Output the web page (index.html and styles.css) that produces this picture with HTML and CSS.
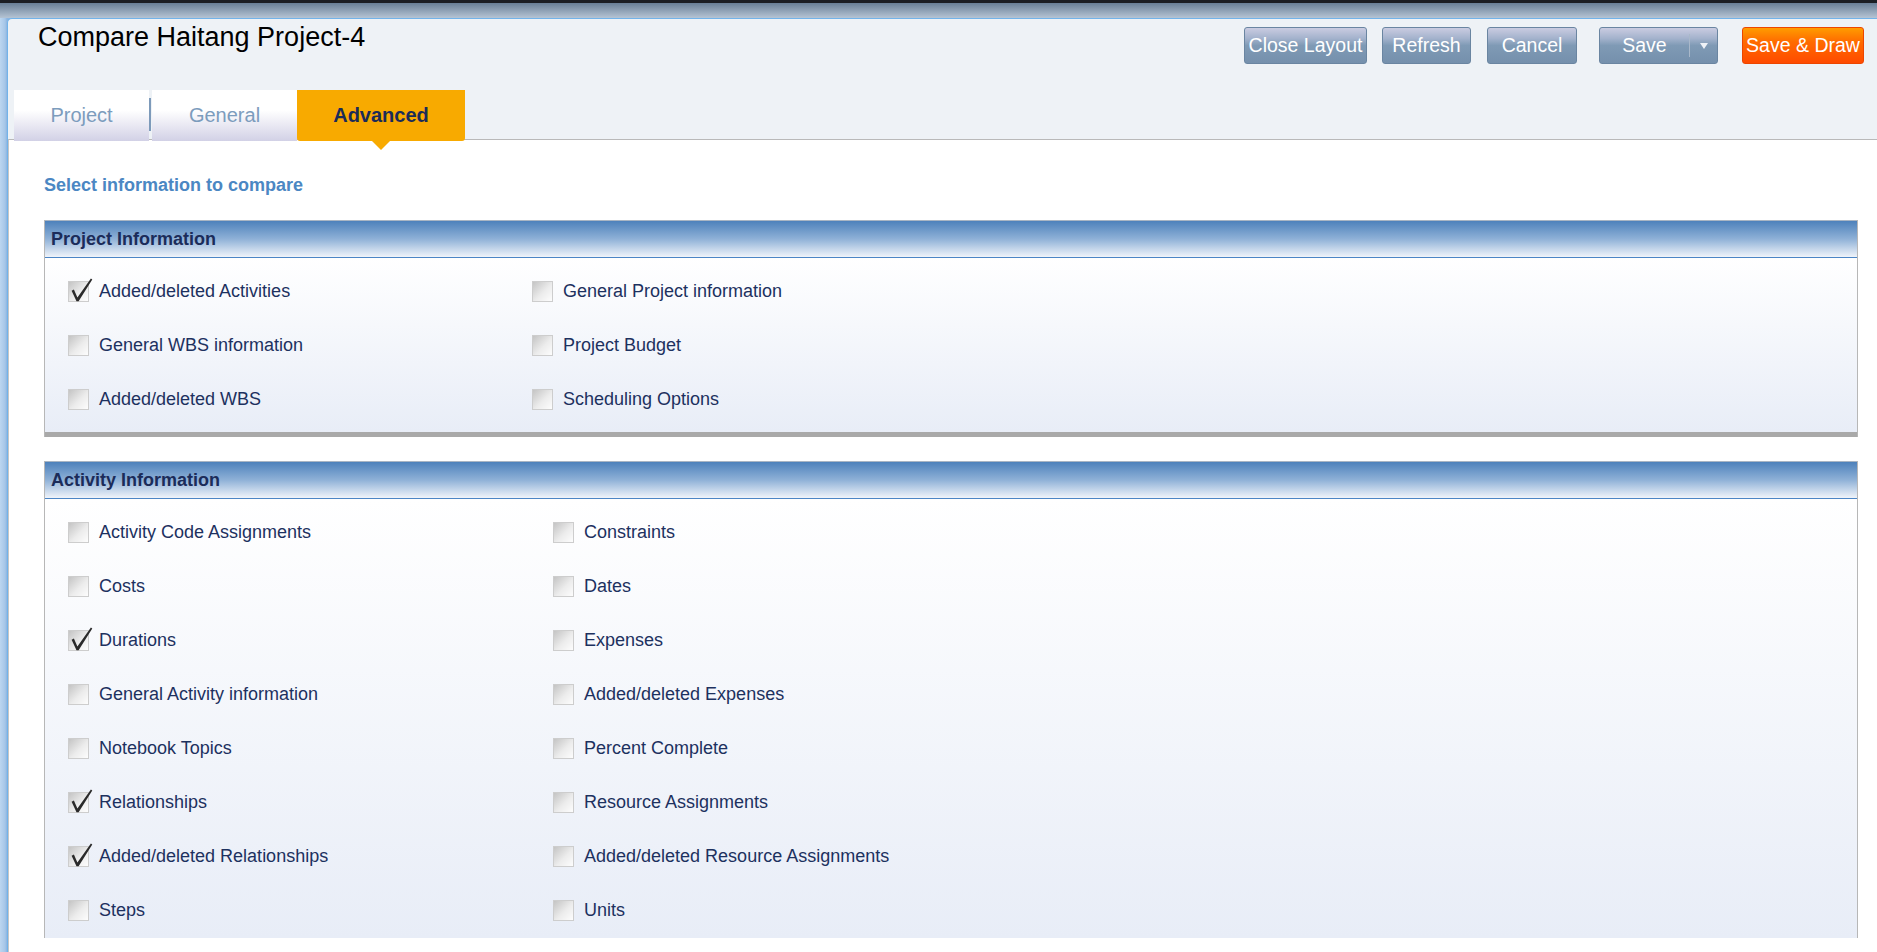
FILE: index.html
```html
<!DOCTYPE html>
<html lang="en">

<head>
    <meta charset="UTF-8">
    <meta name="viewport" content="width=device-width, initial-scale=1.0">
    <title>Compare Haitang Project-4</title>
    <link rel="stylesheet" href="styles.css">
</head>

<body>
    <div class="frame">
        <div class="panel">
            <div class="panel-head">
                <h1 class="title">Compare Haitang Project-4</h1>
                <div class="actions">
                    <button class="btn btn-close">Close Layout</button>
                    <button class="btn btn-refresh">Refresh</button>
                    <button class="btn btn-cancel">Cancel</button>
                    <div class="btn btn-save">
                        <span class="save-main">Save</span>
                        <span class="save-sep"></span>
                        <span class="save-drop"><i></i></span>
                    </div>
                    <button class="btn btn-draw">Save &amp; Draw</button>
                </div>
            </div>

            <div class="tabs">
                <div class="tab tab-project">Project</div>
                <div class="tab-sep"></div>
                <div class="tab tab-general">General</div>
                <div class="tab tab-active">Advanced</div>
            </div>

            <div class="content">
                <p class="lead">Select information to compare</p>

                <!-- project level options -->
                <div class="group group-project">
                    <div class="group-head">Project Information</div>
                    <div class="group-body">
                        <label class="opt"><span class="box checked"><svg width="26" height="26" viewBox="0 0 26 26"><path d="M3.6 12.8 L5.9 11.4 L9.4 19.4 L22.9 0.6 L24.3 1.5 L10.6 23.3 L8.5 23.3 Z" /></svg></span>Added/deleted Activities</label>
                        <label class="opt"><span class="box"></span>General Project information</label>
                        <label class="opt"><span class="box"></span>General WBS information</label>
                        <label class="opt"><span class="box"></span>Project Budget</label>
                        <label class="opt"><span class="box"></span>Added/deleted WBS</label>
                        <label class="opt"><span class="box"></span>Scheduling Options</label>
                    </div>
                </div>

                <!-- activity level options -->
                <div class="group group-activity">
                    <div class="group-head">Activity Information</div>
                    <div class="group-body">
                        <label class="opt"><span class="box"></span>Activity Code Assignments</label>
                        <label class="opt"><span class="box"></span>Constraints</label>
                        <label class="opt"><span class="box"></span>Costs</label>
                        <label class="opt"><span class="box"></span>Dates</label>
                        <label class="opt"><span class="box checked"><svg width="26" height="26" viewBox="0 0 26 26"><path d="M3.6 12.8 L5.9 11.4 L9.4 19.4 L22.9 0.6 L24.3 1.5 L10.6 23.3 L8.5 23.3 Z" /></svg></span>Durations</label>
                        <label class="opt"><span class="box"></span>Expenses</label>
                        <label class="opt"><span class="box"></span>General Activity information</label>
                        <label class="opt"><span class="box"></span>Added/deleted Expenses</label>
                        <label class="opt"><span class="box"></span>Notebook Topics</label>
                        <label class="opt"><span class="box"></span>Percent Complete</label>
                        <label class="opt"><span class="box checked"><svg width="26" height="26" viewBox="0 0 26 26"><path d="M3.6 12.8 L5.9 11.4 L9.4 19.4 L22.9 0.6 L24.3 1.5 L10.6 23.3 L8.5 23.3 Z" /></svg></span>Relationships</label>
                        <label class="opt"><span class="box"></span>Resource Assignments</label>
                        <label class="opt"><span class="box checked"><svg width="26" height="26" viewBox="0 0 26 26"><path d="M3.6 12.8 L5.9 11.4 L9.4 19.4 L22.9 0.6 L24.3 1.5 L10.6 23.3 L8.5 23.3 Z" /></svg></span>Added/deleted Relationships</label>
                        <label class="opt"><span class="box"></span>Added/deleted Resource Assignments</label>
                        <label class="opt"><span class="box"></span>Steps</label>
                        <label class="opt"><span class="box"></span>Units</label>
                    </div>
                </div>
            </div>
        </div>
    </div>
</body>

</html>
```

FILE: styles.css
```css
* {
    margin: 0;
    box-sizing: border-box;
}

html,
body {
    height: 100%;
}

body {
    font-family: "Liberation Sans", Arial, sans-serif;
    background: linear-gradient(to right, #bcd6f0, #a6c6e8 5px, #8db5e0 7px);
    overflow: hidden;
}

/* window chrome: dark strip + grey-blue bar on top */
.frame {
    height: 100%;
    padding: 18px 0 0 7px;
    background: linear-gradient(to bottom, #1b1e24 0, #1b1e24 3px, #687e96 3px, #b5c4d4 18px, transparent 18px);
}

.panel {
    height: 100%;
    background-color: #eef2f6;
    border-top: 1px solid #72b3ea;
    border-left: 1px solid #72b3ea;
    border-top-left-radius: 5px;
    overflow: hidden;
}

.panel-head {
    display: flex;
    align-items: flex-start;
    height: 71px;
    padding: 8px 13px 0 30px;
}

.title {
    margin-top: -5px;
    font-size: 27px;
    font-weight: normal;
    line-height: 31px;
    color: #000;
}

.actions {
    display: flex;
    margin-left: auto;
}

.btn {
    display: flex;
    align-items: center;
    justify-content: center;
    height: 37px;
    padding: 0;
    border: 1px solid #6a85a1;
    border-radius: 3px;
    background: linear-gradient(#cacce1, #a3b2cc 30%, #7f9ab5 50%, #7590ac);
    color: #fff;
    font-family: inherit;
    font-size: 19.5px;
    cursor: pointer;
}

.btn-close {
    width: 123px;
}

.btn-refresh {
    width: 89px;
    margin-left: 15px;
}

.btn-cancel {
    width: 90px;
    margin-left: 16px;
}

.btn-save {
    width: 119px;
    margin-left: 22px;
    justify-content: flex-start;
}

.save-main {
    width: 89px;
    text-align: center;
}

.save-sep {
    width: 1px;
    height: 23px;
    background-color: #a9b8ca;
}

.save-drop {
    flex: 1;
    display: flex;
    justify-content: center;
}

.save-drop i {
    border-left: 4px solid transparent;
    border-right: 4px solid transparent;
    border-top: 6px solid #eef2f7;
}

.btn-draw {
    width: 122px;
    margin-left: 24px;
    border-color: #ec4600;
    background: linear-gradient(#ff9c00, #ff6a00 40%, #ff4b00);
}

/* tabs */
.tabs {
    position: relative;
    z-index: 1;
    display: flex;
    align-items: flex-start;
    height: 51px;
    padding-left: 6px;
}

.tab {
    height: 51px;
    line-height: 51px;
    text-align: center;
    font-size: 20px;
    color: #7c9cbd;
    background: linear-gradient(#fff, #fff 40%, #d2d1e6);
    cursor: pointer;
}

.tab-project {
    width: 135px;
}

.tab-sep {
    width: 2px;
    height: 33px;
    margin: 8px 1px 0 0;
    background-color: #7d9aba;
}

.tab-general {
    width: 145px;
}

.tab-active {
    position: relative;
    width: 168px;
    background: #f8aa00;
    border-radius: 0 0 3px 3px;
    color: #1b2b58;
    font-weight: bold;
}

.tab-active::after {
    content: "";
    position: absolute;
    left: 50%;
    top: 100%;
    margin-left: -9px;
    border-left: 9px solid transparent;
    border-right: 9px solid transparent;
    border-top: 9px solid #f8aa00;
}

/* content */
.content {
    height: calc(100% - 120px);
    margin-top: -2px;
    padding: 35px 19px 0 35px;
    background-color: #fff;
    border-top: 1px solid #b9b9b9;
    border-left: 1px solid #c6c6c6;
}

.lead {
    margin-bottom: 24px;
    font-size: 18px;
    font-weight: bold;
    line-height: 21px;
    color: #4b87c3;
}

.group {
    border-left: 1px solid #b7b7b7;
    border-right: 1px solid #b7b7b7;
}

.group + .group {
    margin-top: 24px;
}

.group-head {
    height: 38px;
    padding-left: 6px;
    border-top: 1px solid #a9b5c3;
    border-bottom: 1px solid #4c85c5;
    background: linear-gradient(#4d81bb, #8fb1d7 50%, #f0f4fa);
    font-size: 18px;
    font-weight: bold;
    line-height: 36px;
    color: #1b2c5a;
}

.group-body {
    display: grid;
    grid-auto-rows: 54px;
    padding: 6px 0 6px 23px;
    background: linear-gradient(#fff, #e8edf7);
}

.group-project .group-body {
    grid-template-columns: 464px 1fr;
    border-bottom: 5px solid #a9a9a9;
}

.group-activity .group-body {
    grid-template-columns: 485px 1fr;
    padding-bottom: 1px;
}

.opt {
    display: flex;
    align-items: center;
    gap: 10px;
    font-size: 18px;
    color: #1d315f;
    cursor: pointer;
}

.box {
    position: relative;
    flex: none;
    width: 21px;
    height: 21px;
    border: 1px solid #cdcdcd;
    background: linear-gradient(135deg, #c4c4c4, #ececec 55%, #fdfdfd);
}

.box svg {
    position: absolute;
    left: -1px;
    top: -4px;
    overflow: visible;
    fill: #2a2a2a;
}
```
